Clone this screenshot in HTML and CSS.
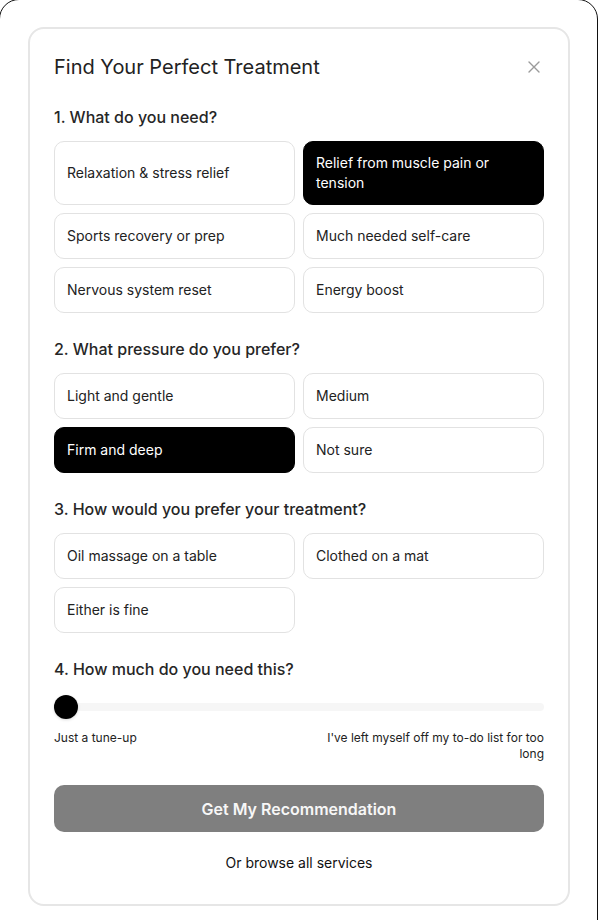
FILE: index.html
```html
<!DOCTYPE html>
<html lang="en">
<head>
    <meta charset="UTF-8">
    <title>Find Your Perfect Treatment</title>
    <link rel="stylesheet" href="styles.css">
</head>
<body>
<div class="frame">
    <div class="card">
        <div class="card-head">
            <h2 class="title">Find Your Perfect Treatment</h2>
            <button class="close-btn" aria-label="Close">
                <svg width="12" height="12" viewBox="0 0 12 12">
                    <path d="M1 1L11 11M11 1L1 11" stroke="#9a9a9a" stroke-width="1.4" stroke-linecap="round"/>
                </svg>
            </button>
        </div>

        <div class="section">
            <div class="question">1. What do you need?</div>
            <div class="options">
                <button class="option">Relaxation &amp; stress relief</button>
                <button class="option selected">Relief from muscle pain or tension</button>
                <button class="option">Sports recovery or prep</button>
                <button class="option">Much needed self-care</button>
                <button class="option">Nervous system reset</button>
                <button class="option">Energy boost</button>
            </div>
        </div>

        <div class="section">
            <div class="question">2. What pressure do you prefer?</div>
            <div class="options">
                <button class="option">Light and gentle</button>
                <button class="option">Medium</button>
                <button class="option selected">Firm and deep</button>
                <button class="option">Not sure</button>
            </div>
        </div>

        <div class="section">
            <div class="question">3. How would you prefer your treatment?</div>
            <div class="options">
                <button class="option">Oil massage on a table</button>
                <button class="option">Clothed on a mat</button>
                <button class="option">Either is fine</button>
            </div>
        </div>

        <div class="section">
            <div class="question">4. How much do you need this?</div>
            <input class="range" type="range" min="0" max="100" value="0">
            <div class="range-labels">
                <span>Just a tune-up</span>
                <span class="range-max">I've left myself off my to-do list for too long</span>
            </div>
        </div>

        <button class="submit-btn">Get My Recommendation</button>
        <a class="browse-link" href="#">Or browse all services</a>
    </div>
</div>
</body>
</html>
```

FILE: styles.css
```css
html, body {
    margin: 0;
    background: #fff;
}

body {
    font-family: Inter, "Noto Sans", sans-serif;
    color: #1f1f1f;
    overflow: hidden;
}

.frame {
    box-sizing: border-box;
    width: 599px;
    min-height: 960px;
    margin: -1px 0 0 -1px;
    padding: 27px 0 0 28px;
    border: 1px solid #111;
    border-radius: 20px 20px 0 0;
}

.card {
    box-sizing: border-box;
    width: 542px;
    height: 879px;
    padding: 24px;
    border: 2px solid #e6e6e6;
    border-radius: 16px;
    display: flex;
    flex-direction: column;

    .card-head {
        display: flex;
        justify-content: space-between;
        align-items: center;
        height: 28px;
    }

    .title {
        margin: 0;
        font-size: 20px;
        font-weight: 400;
        line-height: 28px;
        color: #222;
    }
}

.close-btn {
    width: 20px;
    height: 20px;
    padding: 0;
    border: 0;
    background: none;
    display: flex;
    align-items: center;
    justify-content: center;
    cursor: pointer;
}

.section {
    margin-top: 24px;

    .question {
        font-size: 16px;
        font-weight: 500;
        line-height: 24px;
        color: #262626;
        margin-bottom: 12px;
    }
}

.options {
    display: grid;
    grid-template-columns: 1fr 1fr;
    gap: 8px;
}

.option {
    box-sizing: border-box;
    min-height: 46px;
    font-family: inherit;
    font-size: 14px;
    line-height: 20px;
    text-align: left;
    padding: 11px 12px;
    border: 1px solid #e2e2e2;
    border-radius: 10px;
    background: #fff;
    color: #222;
    cursor: pointer;

    &.selected {
        background: #000;
        border-color: #000;
        color: #fff;
    }
}

.range {
    -webkit-appearance: none;
    appearance: none;
    display: block;
    width: 100%;
    height: 24px;
    margin: 14px 0 0;
    background: transparent;

    &::-webkit-slider-runnable-track {
        height: 8px;
        border-radius: 4px;
        background: #f6f6f6;
    }

    &::-webkit-slider-thumb {
        -webkit-appearance: none;
        width: 24px;
        height: 24px;
        margin-top: -8px;
        border-radius: 50%;
        background: #000;
        box-shadow: 0 1px 3px rgba(0, 0, 0, .15);
    }
}

.range-labels {
    display: flex;
    justify-content: space-between;
    align-items: flex-start;
    margin-top: 11px;
    font-size: 12px;
    line-height: 16px;
    color: #222;

    .range-max {
        max-width: 225px;
        text-align: right;
    }
}

.submit-btn {
    margin-top: 23px;
    height: 47px;
    border: 0;
    border-radius: 10px;
    background: #7f7f7f;
    color: #f7f7f7;
    font-family: inherit;
    font-size: 16px;
    font-weight: 600;
    cursor: pointer;
}

.browse-link {
    align-self: center;
    margin-top: 21px;
    font-size: 14px;
    line-height: 20px;
    color: #111;
    text-decoration: none;
}
```
